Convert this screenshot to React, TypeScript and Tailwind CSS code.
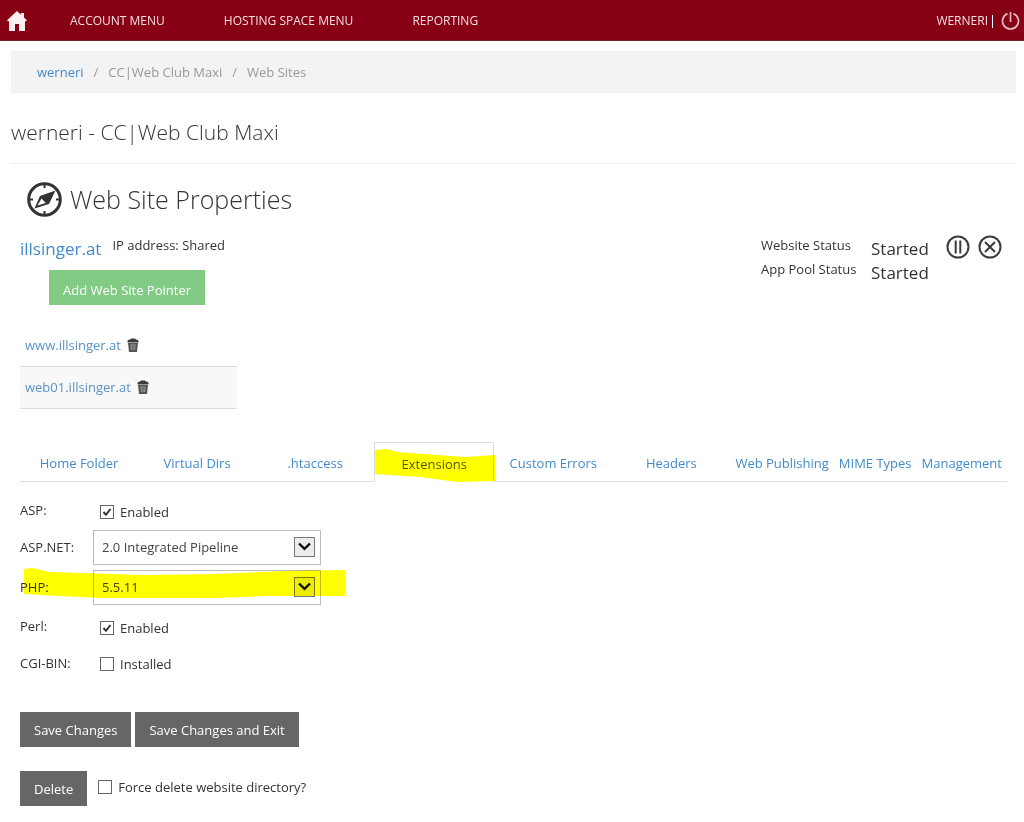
import React from "react";

const tabs = [
  "Home Folder",
  "Virtual Dirs",
  ".htaccess",
  "Extensions",
  "Custom Errors",
  "Headers",
  "Web Publishing",
  "MIME Types",
  "Management",
];

export default function App() {
  return (
    <div className="bg-white font-['Open_Sans','Noto_Sans',sans-serif] text-[13px] leading-5 text-[#333]">
      <TopBar />

      <div className="pl-[11px] pr-2">
        {/* Breadcrumb */}
        <nav
          aria-label="Breadcrumb"
          className="mt-[10px] flex h-[42px] items-center bg-[#f3f3f3] pl-[26px] text-[#999]"
        >
          <a href="#" className="text-[#428bca]">werneri</a>
          <span className="px-[10px]">/</span>
          <span>CC|Web Club Maxi</span>
          <span className="px-[10px]">/</span>
          <span>Web Sites</span>
        </nav>

        <h1 className="flex h-[71px] items-center border-b border-[#eee] pt-2 text-[21px] font-light">
          werneri - CC|Web Club Maxi
        </h1>

        <main className="px-[9px]">
          <h2 className="flex h-[70px] items-center gap-2 pl-[7px] text-[25px] font-light">
            <CompassIcon />
            Web Site Properties
          </h2>

          <SiteSummary />
          <Pointers />
          <Tabs />
          <ExtensionsForm />

          {/* Actions */}
          <div className="mt-9 flex gap-1">
            <GrayButton>Save Changes</GrayButton>
            <GrayButton>Save Changes and Exit</GrayButton>
          </div>
          <div className="mt-6 flex gap-[11px] pb-4">
            <GrayButton>Delete</GrayButton>
            <div className="flex h-8 items-center">
              <Check id="force" label="Force delete website directory?" />
            </div>
          </div>
        </main>
      </div>
    </div>
  );
}

function TopBar() {
  return (
    <header className="flex h-[41px] items-center border-b border-[#74202c] bg-[#870014] pl-[7px] pr-1 pt-[2px] text-xs text-[#f5dfe2]">
      <a href="#" aria-label="Home">
        <svg width="20" height="20" viewBox="0 0 20 20" fill="#fbeef0">
          <path d="M10 0 L14 3.7 V2 H17 V6.4 L20 9.2 L18.8 10.4 L18 9.8 V20 H12 V13 H8 V20 H2 V9.8 L1.2 10.4 L0 9.2 Z" />
        </svg>
      </a>
      <nav className="ml-[43px] flex gap-[59px]">
        <a href="#">ACCOUNT MENU</a>
        <a href="#">HOSTING SPACE MENU</a>
        <a href="#">REPORTING</a>
      </nav>
      <div className="ml-auto flex items-center">
        <a href="#">WERNERI</a>
        <span className="ml-1 h-[13px] w-px bg-white" />
        <button type="button" aria-label="Log out" className="ml-2">
          <svg width="19" height="20" viewBox="0 0 19 20" fill="none" stroke="#e6b9c0" strokeWidth="1.7">
            <path d="M6.5 2.6 A8 8 0 1 0 12.5 2.6" />
            <path d="M9.5 1 V11" />
          </svg>
        </button>
      </div>
    </header>
  );
}

function SiteSummary() {
  return (
    <section className="flex h-[88px] items-start justify-between pt-px">
      <div>
        <div className="flex">
          <a href="#" className="pt-1 text-[17px] text-[#428bca]">illsinger.at</a>
          <span className="ml-[11px]">IP address: Shared</span>
        </div>
        <button
          type="button"
          className="ml-[29px] mt-[11px] h-[35px] bg-[#82cb84] px-[14px] pt-1 text-[13px] text-white"
        >
          Add Web Site Pointer
        </button>
      </div>
      <div className="flex pr-[5px]">
        <div className="grid w-[110px] auto-rows-[24px]">
          <span>Website Status</span>
          <span>App Pool Status</span>
        </div>
        <div className="grid w-[75px] auto-rows-[24px] pt-1 text-[17px]">
          <span>Started</span>
          <span>Started</span>
        </div>
        <div className="flex gap-2">
          <button type="button" aria-label="Pause" className="h-6">
            <svg width="24" height="24" viewBox="0 0 24 24" fill="none" stroke="#3b3b3b" strokeWidth="2">
              <circle cx="12" cy="12" r="10.5" />
              <path d="M9.7 5.5 V18.5 M14.3 5.5 V18.5" />
            </svg>
          </button>
          <button type="button" aria-label="Stop" className="h-6">
            <svg width="24" height="24" viewBox="0 0 24 24" fill="none" stroke="#3b3b3b" strokeWidth="2">
              <circle cx="12" cy="12" r="10.5" />
              <path d="M7 7 L17 17 M17 7 L7 17" />
            </svg>
          </button>
        </div>
      </div>
    </section>
  );
}

function Pointers() {
  return (
    <table className="mt-[2px] w-[217px] text-[#5b92c4]">
      <tbody>
        {["www.illsinger.at", "web01.illsinger.at"].map((host) => (
          <tr key={host} className="h-[42px] border-b border-[#ddd] even:bg-[#f8f8f8]">
            <td className="pl-[5px]">
              <div className="flex items-center gap-[6px]">
                <a href="#">{host}</a>
                <button type="button" aria-label={`Delete ${host}`}>
                  <TrashIcon />
                </button>
              </div>
            </td>
          </tr>
        ))}
      </tbody>
    </table>
  );
}

function Tabs() {
  return (
    <div role="tablist" className="mt-[33px] flex h-10 border-b border-[#ddd]">
      {tabs.map((tab, i) => {
        if (tab === "Extensions") {
          return (
            <button
              key={tab}
              type="button"
              role="tab"
              aria-selected="true"
              className="relative -mb-px flex-1 border border-b-white border-[#ddd] pt-1 text-[#555]"
            >
              {tab}
              {/* marker stroke */}
              <svg
                className="pointer-events-none absolute left-0 top-[6px] mix-blend-multiply"
                width="121"
                height="34"
                viewBox="0 0 121 34"
                fill="#ffff00"
              >
                <path d="M0 1 L12 0 L22 3 L90 8 L120 6 L121 32 L82 33 L45 28 L0 25 Z" />
              </svg>
            </button>
          );
        }
        return (
          <button
            key={tab}
            type="button"
            role="tab"
            aria-selected="false"
            className={
              i < 6
                ? "flex-1 pt-1 text-[#428bca]"
                : "whitespace-nowrap px-[5px] pt-1 text-[#428bca]"
            }
          >
            {tab}
          </button>
        );
      })}
    </div>
  );
}

function ExtensionsForm() {
  return (
    <form className="relative mt-[11px]">
      <Row label="ASP:" className="h-[37px]">
        <div className="pl-[7px] pt-[9px]">
          <Check id="asp" label="Enabled" checked />
        </div>
      </Row>
      <Row label="ASP.NET:" htmlFor="aspnet" className="h-10">
        <Select id="aspnet" options={["2.0 Integrated Pipeline", "4.0 Integrated Pipeline"]} />
      </Row>
      <Row label="PHP:" htmlFor="php" className="h-[39px]">
        <Select id="php" options={["5.5.11", "5.4.27", "5.3.28"]} />
      </Row>
      <Row label="Perl:" className="h-[37px]">
        <div className="pl-[7px] pt-[9px]">
          <Check id="perl" label="Enabled" checked />
        </div>
      </Row>
      <Row label="CGI-BIN:" className="h-[30px]">
        <div className="pl-[7px] pt-2">
          <Check id="cgi" label="Installed" />
        </div>
      </Row>

      {/* marker stroke */}
      <svg
        className="pointer-events-none absolute left-1 top-[75px] mix-blend-multiply"
        width="321"
        height="31"
        viewBox="0 0 321 31"
        fill="#ffff00"
      >
        <path d="M0 1 L8 0 L26 4 L120 7 L190 6 L260 3 L321 2 V28 L245 28 L190 30 L80 30 L35 28 L0 26 Z" />
      </svg>
    </form>
  );
}

function Row({
  label,
  htmlFor,
  className,
  children,
}: {
  label: string;
  htmlFor?: string;
  className: string;
  children: React.ReactNode;
}) {
  return (
    <div className={`flex items-start ${className}`}>
      <label htmlFor={htmlFor} className="w-[73px] pt-[7px]">{label}</label>
      {children}
    </div>
  );
}

function Select({ id, options }: { id: string; options: string[] }) {
  return (
    <div className="relative w-[228px]">
      <select
        id={id}
        className="h-[35px] w-full appearance-none border border-[#bbb] bg-white pl-2 pr-8 text-[13px] text-[#444]"
      >
        {options.map((o) => (
          <option key={o}>{o}</option>
        ))}
      </select>
      <span className="pointer-events-none absolute right-[6px] top-[7px] flex h-5 w-[21px] items-center justify-center border border-[#777] bg-[#ececec]">
        <svg width="13" height="9" viewBox="0 0 13 9" fill="none" stroke="#111" strokeWidth="2.4">
          <path d="M1 1.5 L6.5 6.8 L12 1.5" />
        </svg>
      </span>
    </div>
  );
}

function Check({ id, label, checked }: { id: string; label: string; checked?: boolean }) {
  return (
    <div className="flex items-center gap-[6px]">
      <span className="relative flex">
        <input
          id={id}
          type="checkbox"
          defaultChecked={checked}
          className="peer size-[14px] appearance-none border border-[#666] bg-white"
        />
        <svg
          className="pointer-events-none absolute inset-0 hidden peer-checked:block"
          width="14"
          height="14"
          viewBox="0 0 14 14"
          fill="none"
          stroke="#333"
          strokeWidth="2"
        >
          <path d="M3.5 7 L6 9.8 L10.5 4" />
        </svg>
      </span>
      <label htmlFor={id}>{label}</label>
    </div>
  );
}

function GrayButton({ children }: { children: React.ReactNode }) {
  return (
    <button type="button" className="h-[35px] bg-[#666] px-[14px] pt-[2px] text-[13px] text-white">
      {children}
    </button>
  );
}

function CompassIcon() {
  return (
    <svg width="35" height="35" viewBox="0 0 35 35" fill="none">
      <circle cx="17.5" cy="17.5" r="15.8" stroke="#333" strokeWidth="3" />
      <path d="M17.5 3 V6 M17.5 29 V32 M3 17.5 H6 M29 17.5 H32" stroke="#333" strokeWidth="2" />
      <path fillRule="evenodd" d="M28.5 8.5 L22 22 L7.5 26.5 L13 14 Z M14.5 16.5 L10.5 23.6 L18.8 21 Z" fill="#333" />
    </svg>
  );
}

function TrashIcon() {
  return (
    <svg width="12" height="14" viewBox="0 0 12 14" fill="none">
      <path d="M1 5 H11 L10 14 H2 Z" fill="#555" />
      <path d="M0.5 4.5 V3 Q0.5 1.5 3 1.5 L4 0.5 H8 L9 1.5 Q11.5 1.5 11.5 3 V4.5 Z" fill="#3c3c3c" />
      <path d="M4 6 L4.4 12 M6 6 V12 M8 6 L7.6 12" stroke="#aaa" strokeWidth="0.8" />
    </svg>
  );
}
